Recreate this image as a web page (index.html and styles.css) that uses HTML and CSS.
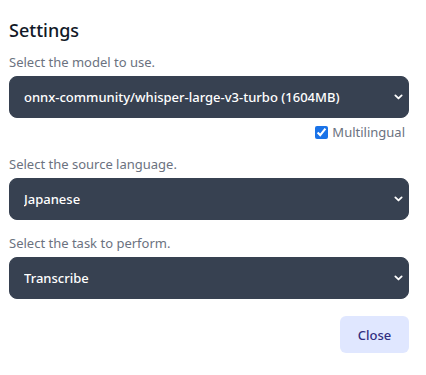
FILE: index.html
```html
<!DOCTYPE html>
<html lang="en">
<head>
  <meta charset="UTF-8">
  <title>Settings</title>
  <link rel="stylesheet" href="styles.css">
</head>
<body>

  <div class="panel">
    <h3>Settings</h3>

    <label class="caption">Select the model to use.</label>
    <div class="field">
      <select>
        <option>onnx-community/whisper-large-v3-turbo (1604MB)</option>
      </select>
      <svg class="chev" viewBox="0 0 10 6" width="9" height="6"><path d="M1.5 1.2 L5 4.6 L8.5 1.2" fill="none" stroke="#fff" stroke-width="2" stroke-linecap="round" stroke-linejoin="round"/></svg>
    </div>
    <div class="check-row">
      <input type="checkbox" id="multi" checked>
      <label for="multi">Multilingual</label>
    </div>

    <label class="caption">Select the source language.</label>
    <div class="field">
      <select>
        <option>Japanese</option>
      </select>
      <svg class="chev" viewBox="0 0 10 6" width="9" height="6"><path d="M1.5 1.2 L5 4.6 L8.5 1.2" fill="none" stroke="#fff" stroke-width="2" stroke-linecap="round" stroke-linejoin="round"/></svg>
    </div>

    <label class="caption">Select the task to perform.</label>
    <div class="field">
      <select>
        <option>Transcribe</option>
      </select>
      <svg class="chev" viewBox="0 0 10 6" width="9" height="6"><path d="M1.5 1.2 L5 4.6 L8.5 1.2" fill="none" stroke="#fff" stroke-width="2" stroke-linecap="round" stroke-linejoin="round"/></svg>
    </div>

    <div class="actions">
      <button class="close">Close</button>
    </div>
  </div>

</body>
</html>
```

FILE: styles.css
```css
body {
  margin: 0;
  background: #fff;
  font-family: 'Noto Sans', 'Open Sans', sans-serif;
}

.panel {
  width: 400px;
  padding: 16px 0 0 9px;
  display: flex;
  flex-direction: column;
}

h3 {
  margin: 0 0 9px;
  font-size: 18px;
  font-weight: 500;
  color: #111827;
  line-height: 28px;
}

.caption {
  font-size: 13px;
  color: #6b7280;
  line-height: 18px;
  margin-bottom: 5px;
}

.field {
  position: relative;
  margin-bottom: 14px;
}

.field select {
  appearance: none;
  -webkit-appearance: none;
  display: block;
  width: 100%;
  height: 42px;
  border: 1px solid #374151;
  border-radius: 8px;
  background: #374151;
  color: #fff;
  font-family: inherit;
  font-size: 13px;
  font-weight: 500;
  padding: 0 14px;
  outline: none;
}

.chev {
  position: absolute;
  right: 6px;
  top: 18px;
  pointer-events: none;
}

.check-row {
  display: flex;
  justify-content: flex-end;
  align-items: center;
  gap: 4px;
  margin: -9px 4px 14px 0;
  font-size: 13px;
  line-height: 18px;
  color: #6b7280;
}

.check-row input {
  width: 13px;
  height: 13px;
  margin: 0;
  accent-color: #1a73e8;
}

.actions {
  display: flex;
  justify-content: flex-end;
  margin-top: 3px;
}

.close {
  border: none;
  background: #e0e7ff;
  color: #312e81;
  font-family: inherit;
  font-size: 13px;
  font-weight: 500;
  border-radius: 6px;
  width: 69px;
  height: 37px;
}
```
